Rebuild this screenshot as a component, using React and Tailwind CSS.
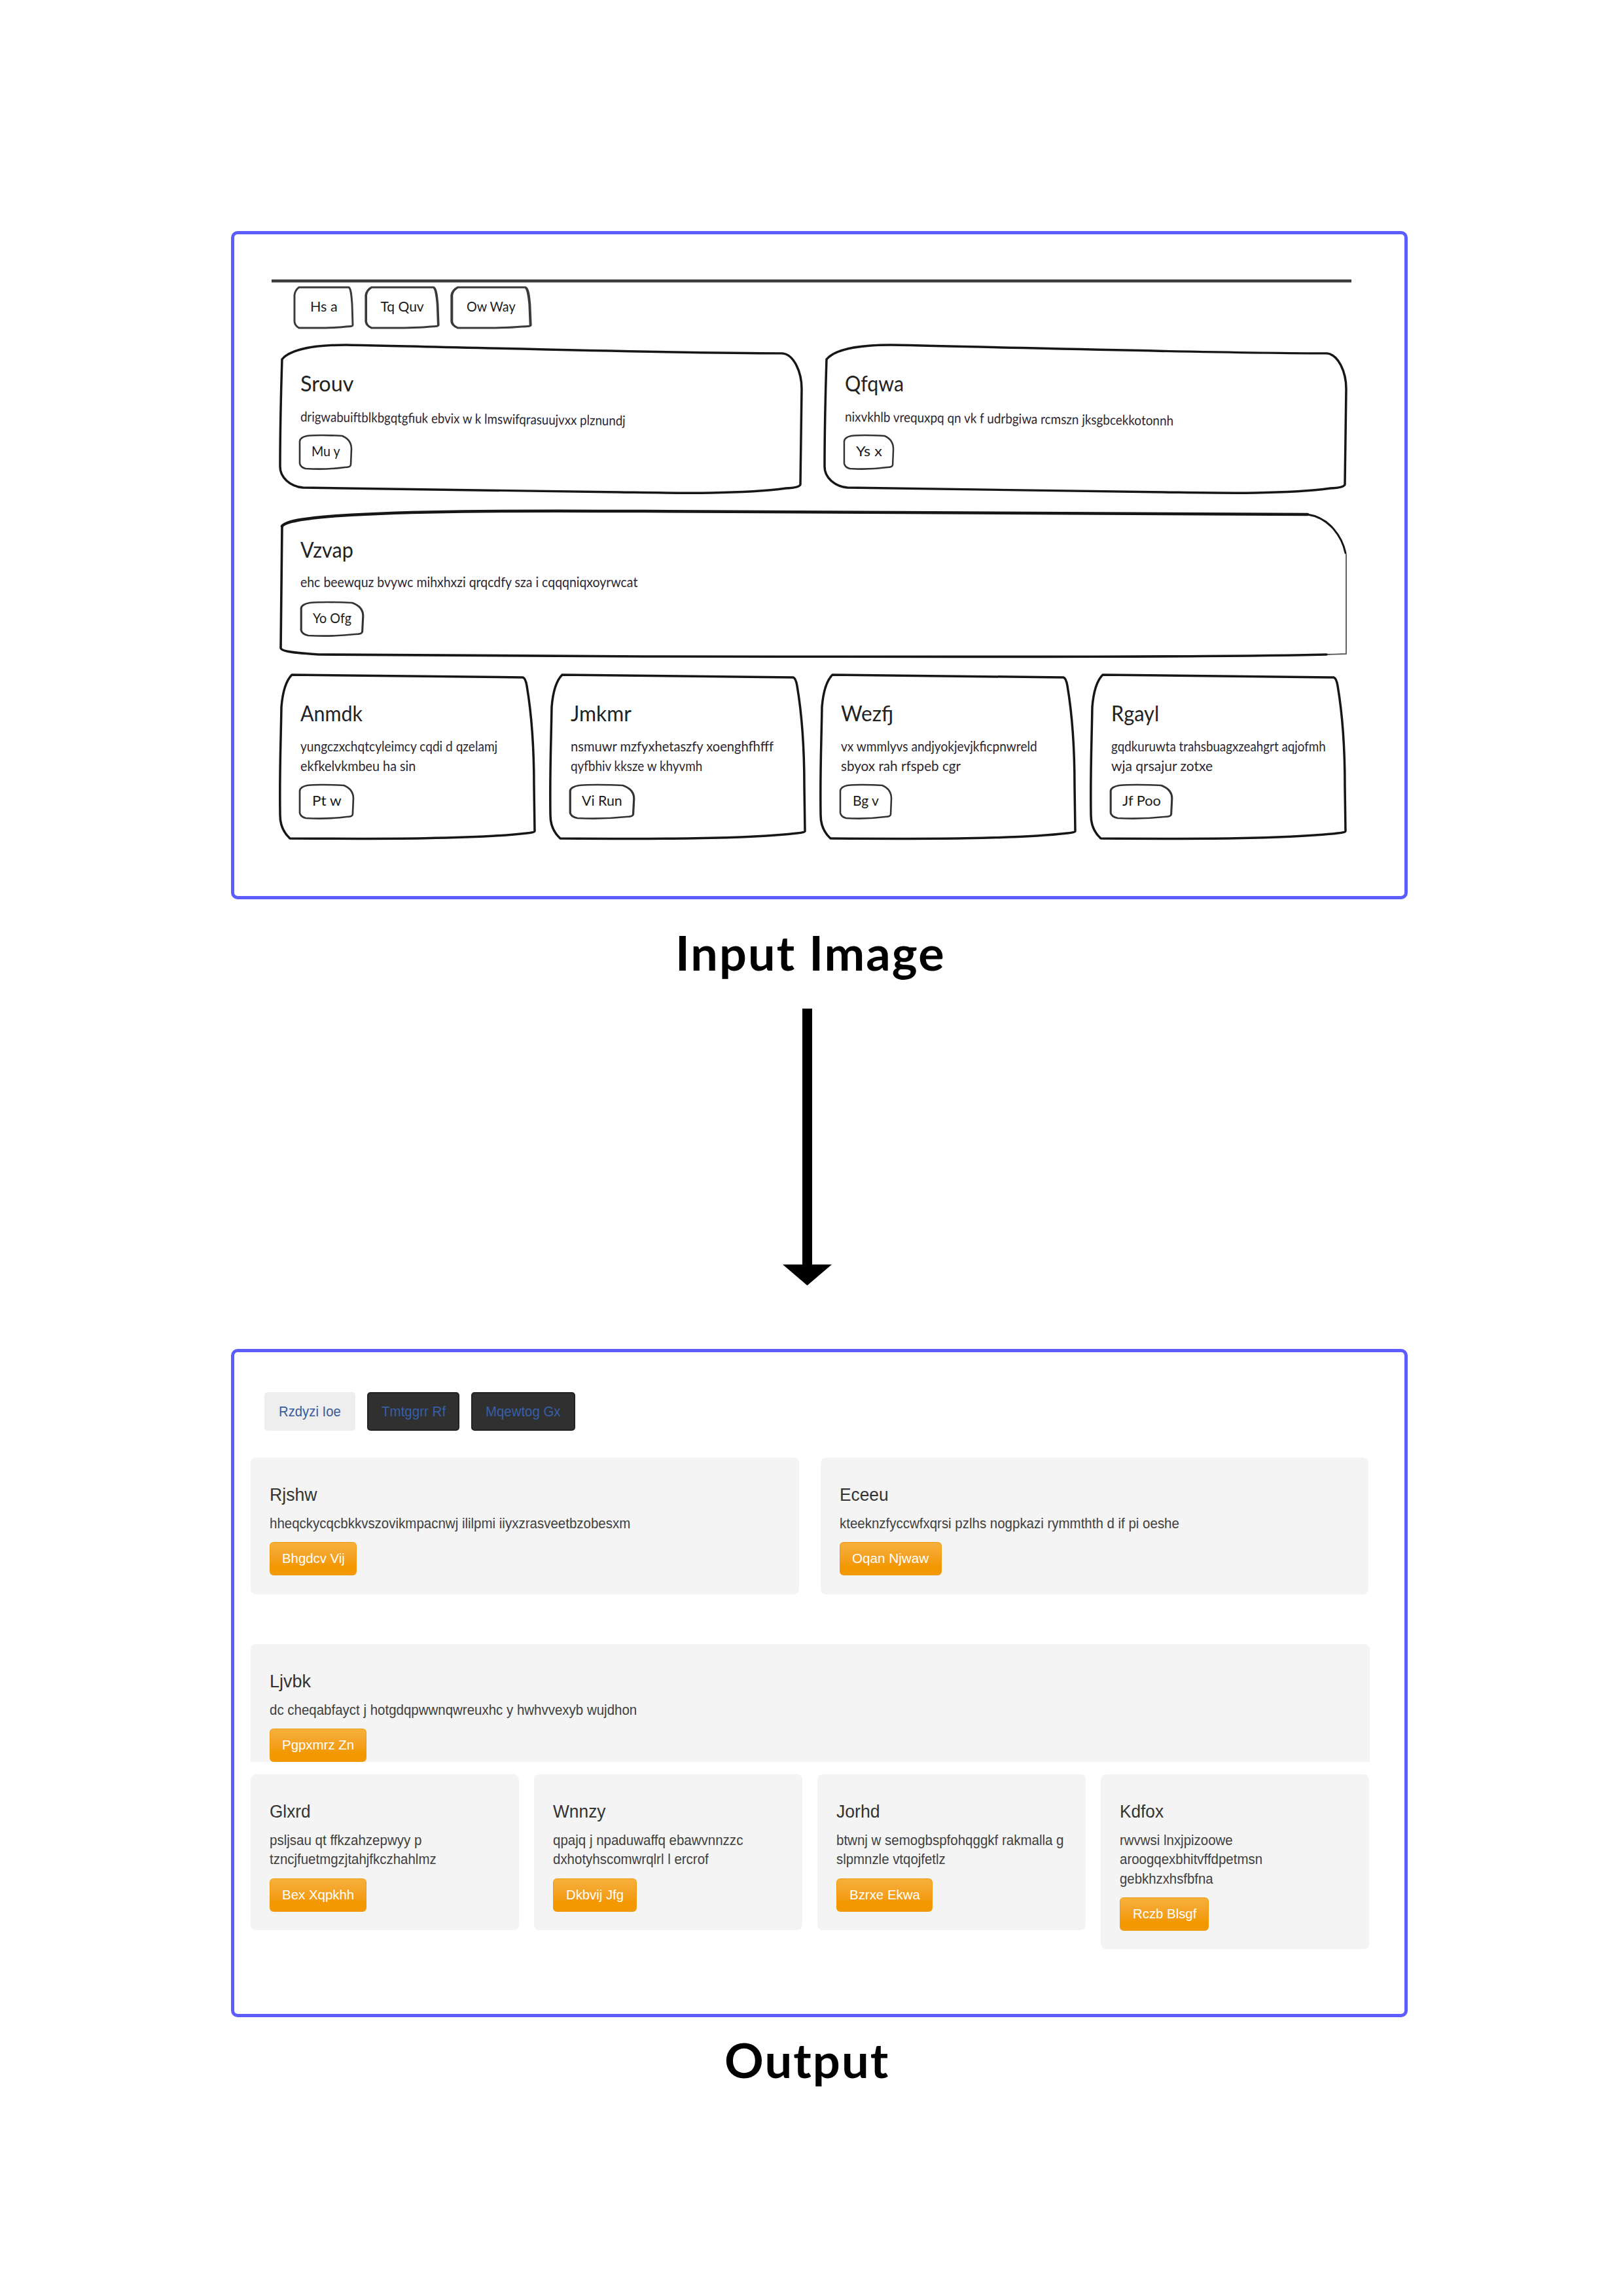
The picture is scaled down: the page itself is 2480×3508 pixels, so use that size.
import { useLayoutEffect, useRef, useState } from "react";

/* One line of text stretched or condensed horizontally so it spans `w` pixels. */
function Fit({ w, children, className = "" }) {
  const ref = useRef(null);
  const [scale, setScale] = useState(1);
  useLayoutEffect(() => {
    setScale(w / ref.current.offsetWidth);
  }, [w, children]);
  return (
    <div style={{ width: w }}>
      <span
        ref={ref}
        className={"block w-max origin-left whitespace-pre " + className}
        style={{ transform: `scaleX(${scale})` }}
      >
        {children}
      </span>
    </div>
  );
}

function Outline({ vw, vh, d, stroke = 3.5, color = "#161616", children }) {
  return (
    <svg
      className="absolute inset-0 h-full w-full overflow-visible"
      viewBox={`0 0 ${vw} ${vh}`}
      preserveAspectRatio="none"
      fill="none"
      stroke={color}
      strokeWidth={stroke}
      strokeLinecap="round"
      strokeLinejoin="round"
    >
      {d && <path d={d} />}
      {children}
    </svg>
  );
}

const TAB_PATH = "M8 2 H86 C89 4 90 14 91 28 L92 60 Q92 62 82 62 C60 65 35 64 8 64 Q1 60 1 54 V14 Q2 6 8 2 Z";
const BUTTON_PATH = "M12 2 Q30 0 66 2 Q80 8 80 22 L79 46 Q79 50 70 50 Q40 54 10 52 Q2 50 1 44 V10 Q2 4 12 2 Z";
const HALF_PATH =
  "M4 24 C16 10 50 2 102 2 C300 6 600 15 768 15 C786 16 798 44 798 70 L796 217 Q795 222 774 223 C700 233 590 230 520 229 L36 222 C16 220 1 206 1 190 Q1 120 4 24 Z";
const QUARTER_PATH =
  "M19 1 L372 5 Q376 6 378 18 C386 65 389 110 389 172 L390 240 Q390 242 378 243 C300 252 160 252 16 251 C6 242 1 230 1 215 C0 150 2 110 3 50 Q6 14 19 1 Z";

function SketchButton({ w, textW, children }) {
  return (
    <div className="relative h-[54px]" style={{ width: w }}>
      <Outline vw={81} vh={54} d={BUTTON_PATH} stroke={2.6} color="#333333" />
      <div className="flex h-full items-center justify-center pb-1">
        <Fit w={textW} className="text-[21px] leading-7">
          {children}
        </Fit>
      </div>
    </div>
  );
}

function SketchCard({ title, titleW, lines, btn, btnW, btnTextW, titleCls, lineCls, btnCls }) {
  return (
    <>
      <Fit w={titleW} className={"text-[32px] leading-9 text-[#222222] " + titleCls}>
        {title}
      </Fit>
      <div className={lineCls}>
        {lines.map(([text, w]) => (
          <Fit key={text} w={w} className="text-[21px] leading-[29.5px] text-[#2b2630]">
            {text}
          </Fit>
        ))}
      </div>
      <div className={btnCls}>
        <SketchButton w={btnW} textW={btnTextW}>
          {btn}
        </SketchButton>
      </div>
    </>
  );
}

const sketchTabs = [
  { text: "Hs a", w: 91, textW: 42 },
  { text: "Tq Quv", w: 113, textW: 66 },
  { text: "Ow Way", w: 123, textW: 75 },
];

const sketchHalves = [
  { title: "Srouv", titleW: 82, lines: [["drigwabuiftblkbgqtgfiuk ebvix w k lmswifqrasuujvxx plznundj", 497]], btn: "Mu y", btnW: 81, btnTextW: 44 },
  { title: "Qfqwa", titleW: 90, lines: [["nixvkhlb vrequxpq qn vk f udrbgiwa rcmszn jksgbcekkotonnh", 502]], btn: "Ys x", btnW: 77, btnTextW: 40 },
];

const sketchQuarters = [
  { title: "Anmdk", titleW: 95, lines: [["yungczxchqtcyleimcy cqdi d qzelamj", 301], ["ekfkelvkmbeu ha sin", 176]], btn: "Pt w", btnW: 84, btnTextW: 45 },
  { title: "Jmkmr", titleW: 93, lines: [["nsmuwr mzfyxhetaszfy xoenghfhfff", 310], ["qyfbhiv kksze w khyvmh", 201]], btn: "Vi Run", btnW: 100, btnTextW: 62 },
  { title: "Wezfj", titleW: 80, lines: [["vx wmmlyvs andjyokjevjkficpnwreld", 300], ["sbyox rah rfspeb cgr", 183]], btn: "Bg v", btnW: 80, btnTextW: 40 },
  { title: "Rgayl", titleW: 73, lines: [["gqdkuruwta trahsbuagxzeahgrt aqjofmh", 328], ["wja qrsajur zotxe", 155]], btn: "Jf Poo", btnW: 96, btnTextW: 59 },
];

function SketchPanel() {
  return (
    <section className="h-[1021px] w-[1798px] rounded-[10px] border-[5px] border-[#5c5cff] bg-white pt-[69px] pl-[57px] font-[Lato,sans-serif] text-[#1a1a1a]">
      <div className="h-[5px] w-[1650px] border-b border-[#9a9a9a] bg-[#3c3c3e]" />
      <div className="mt-[5px] ml-[34px] flex gap-[18px]">
        {sketchTabs.map((t) => (
          <div key={t.text} className="relative h-[66px]" style={{ width: t.w }}>
            <Outline vw={93} vh={66} d={TAB_PATH} stroke={3} color="#3a3a38" />
            <div className="flex h-full items-center justify-center pb-1">
              <Fit w={t.textW} className="text-[21px] leading-7">
                {t.text}
              </Fit>
            </div>
          </div>
        ))}
      </div>
      <div className="mt-[22px] ml-3 flex gap-8">
        {sketchHalves.map((c) => (
          <div key={c.title} className="relative h-[229px] w-[800px] pl-8">
            <Outline vw={800} vh={231} d={HALF_PATH} />
            <SketchCard {...c} titleCls="pt-[43px]" lineCls="mt-[17px] origin-left rotate-[0.7deg]" btnCls="mt-[13px] -ml-0.5" />
          </div>
        ))}
      </div>
      <div className="relative mt-[25px] ml-3 h-[225px] w-[1631px] pl-8">
        <Outline vw={1631} vh={225}>
          <path d="M4 25 C10 16 50 12 90 9 C230 0 400 2 560 2 L1571 7" strokeWidth={4.5} />
          <path d="M1571 7 C1605 12 1624 42 1629 66" strokeWidth={3} />
          <path d="M1630 68 V220 L1600 221" strokeWidth={1.8} stroke="#555555" />
          <path d="M1600 221 C1400 226 900 224 560 224 L60 221 C30 219 2 217 2 211 L4 25" strokeWidth={3.6} />
        </Outline>
        <SketchCard
          title="Vzvap"
          titleW={81}
          lines={[["ehc beewquz bvywc mihxhxzi qrqcdfy sza i cqqqniqxoyrwcat", 515]]}
          btn="Yo Ofg"
          btnW={97}
          btnTextW={59}
          titleCls="pt-[43px]"
          lineCls="mt-[16px]"
          btnCls="mt-[15px]"
        />
      </div>
      <div className="mt-[26px] ml-3 flex gap-[22px]">
        {sketchQuarters.map((c) => (
          <div key={c.title} className="relative h-[252px] w-[391px] pl-8">
            <Outline vw={391} vh={252} d={QUARTER_PATH} />
            <SketchCard {...c} titleCls="pt-[42px]" lineCls="mt-[17px]" btnCls="mt-[14px] -ml-0.5" />
          </div>
        ))}
      </div>
    </section>
  );
}

const tabs = [
  { text: "Rzdyzi Ioe", w: 139, textW: 95, cls: "bg-[#eeeeee] text-[#3a5a9c]" },
  { text: "Tmtggrr Rf", w: 141, textW: 98, cls: "bg-[#303030] text-[#365fa8] border-2 border-[#222222]" },
  { text: "Mqewtog Gx", w: 159, textW: 115, cls: "bg-[#303030] text-[#365fa8] border-2 border-[#222222]" },
];

const halves = [
  { title: "Rjshw", titleW: 73, lines: [["hheqckycqcbkkvszovikmpacnwj ililpmi iiyxzrasveetbzobesxm", 551]], btn: "Bhgdcv Vij", btnW: 133, btnTextW: 96 },
  { title: "Eceeu", titleW: 75, lines: [["kteeknzfyccwfxqrsi pzlhs nogpkazi rymmthth d if pi oeshe", 519]], btn: "Oqan Njwaw", btnW: 156, btnTextW: 117 },
];

const quarters = [
  { title: "Glxrd", titleW: 63, lines: [["psljsau qt ffkzahzepwyy p", 232], ["tzncjfuetmgzjtahjfkczhahlmz", 255]], btn: "Bex Xqpkhh", btnW: 148, btnTextW: 110 },
  { title: "Wnnzy", titleW: 81, lines: [["qpajq j npaduwaffq ebawvnnzzc", 290], ["dxhotyhscomwrqlrl l ercrof", 238]], btn: "Dkbvij Jfg", btnW: 128, btnTextW: 88 },
  { title: "Jorhd", titleW: 67, lines: [["btwnj w semogbspfohqggkf rakmalla g", 348], ["slpmnzle vtqojfetlz", 167]], btn: "Bzrxe Ekwa", btnW: 147, btnTextW: 108 },
  { title: "Kdfox", titleW: 67, lines: [["rwvwsi lnxjpizoowe", 173], ["aroogqexbhitvffdpetmsn", 218], ["gebkhzxhsfbfna", 143]], btn: "Rczb Blsgf", btnW: 136, btnTextW: 97 },
];

function CardBody({ title, titleW, lines, btn, btnW, btnTextW }) {
  return (
    <>
      <Fit w={titleW} className="pt-[42px] text-[27px] leading-[30px] text-[#333333]">
        {title}
      </Fit>
      <div className="mt-[15px]">
        {lines.map(([text, w]) => (
          <Fit key={text} w={w} className="text-[21.5px] leading-[29.4px] text-[#404040]">
            {text}
          </Fit>
        ))}
      </div>
      <div
        className="mt-[13px] flex h-[51px] items-center justify-center rounded-md border border-b-2 border-[#f09a10] bg-linear-to-b from-[#f6b03a] to-[#f39800] to-75% text-white"
        style={{ width: btnW }}
      >
        <Fit w={btnTextW} className="text-[21px] leading-6">
          {btn}
        </Fit>
      </div>
    </>
  );
}

function OutputPanel() {
  return (
    <section className="h-[1021px] w-[1798px] rounded-[10px] border-[5px] border-[#5c5cff] bg-white pt-[61px] pl-[25px] font-['Liberation_Sans',sans-serif]">
      <div className="ml-[21px] flex gap-[18px]">
        {tabs.map((t) => (
          <div key={t.text} className={"flex h-[59px] items-center justify-center rounded-[5px] " + t.cls} style={{ width: t.w }}>
            <Fit w={t.textW} className="text-[22px] leading-7">
              {t.text}
            </Fit>
          </div>
        ))}
      </div>
      <div className="mt-[41px] flex gap-[33px]">
        {halves.map((c) => (
          <div key={c.title} className="h-[209px] w-[837.5px] rounded-lg bg-[#f4f4f4] pl-[29px]">
            <CardBody {...c} />
          </div>
        ))}
      </div>
      <div className="mt-[76px] h-[180px] w-[1710px] rounded-t-lg bg-[#f4f4f4] pl-[29px]">
        <CardBody
          title="Ljvbk"
          titleW={63}
          lines={[["dc cheqabfayct j hotgdqpwwnqwreuxhc y hwhvvexyb wujdhon", 561]]}
          btn="Pgpxmrz Zn"
          btnW={148}
          btnTextW={110}
        />
      </div>
      <div className="mt-[19px] flex items-start gap-[23px]">
        {quarters.map((c) => (
          <div key={c.title} className="w-[410px] rounded-lg bg-[#f4f4f4] pb-[28px] pl-[29px]">
            <CardBody {...c} />
          </div>
        ))}
      </div>
    </section>
  );
}

export default function App() {
  return (
    <main className="h-[3508px] w-[2480px] overflow-hidden bg-white pt-[353px] pl-[353px] text-black">
      <SketchPanel />
      <h2 className="mt-[38px] ml-[679px] font-[Lato,sans-serif] font-bold">
        <Fit w={413} className="text-[72px] leading-[86px] tracking-[2px]">
          Input Image
        </Fit>
      </h2>
      <svg className="mt-[43px] ml-[843px] block h-[423px] w-[75px]" viewBox="0 0 75 423" fill="#000000">
        <path d="M30 0 H45 V391 H75 L37.5 423 L0 391 H30 Z" />
      </svg>
      <div className="mt-[97px]">
        <OutputPanel />
      </div>
      <h2 className="mt-[22px] ml-[754px] font-[Lato,sans-serif] font-bold">
        <Fit w={252} className="text-[72px] leading-[86px] tracking-[2px]">
          Output
        </Fit>
      </h2>
    </main>
  );
}
